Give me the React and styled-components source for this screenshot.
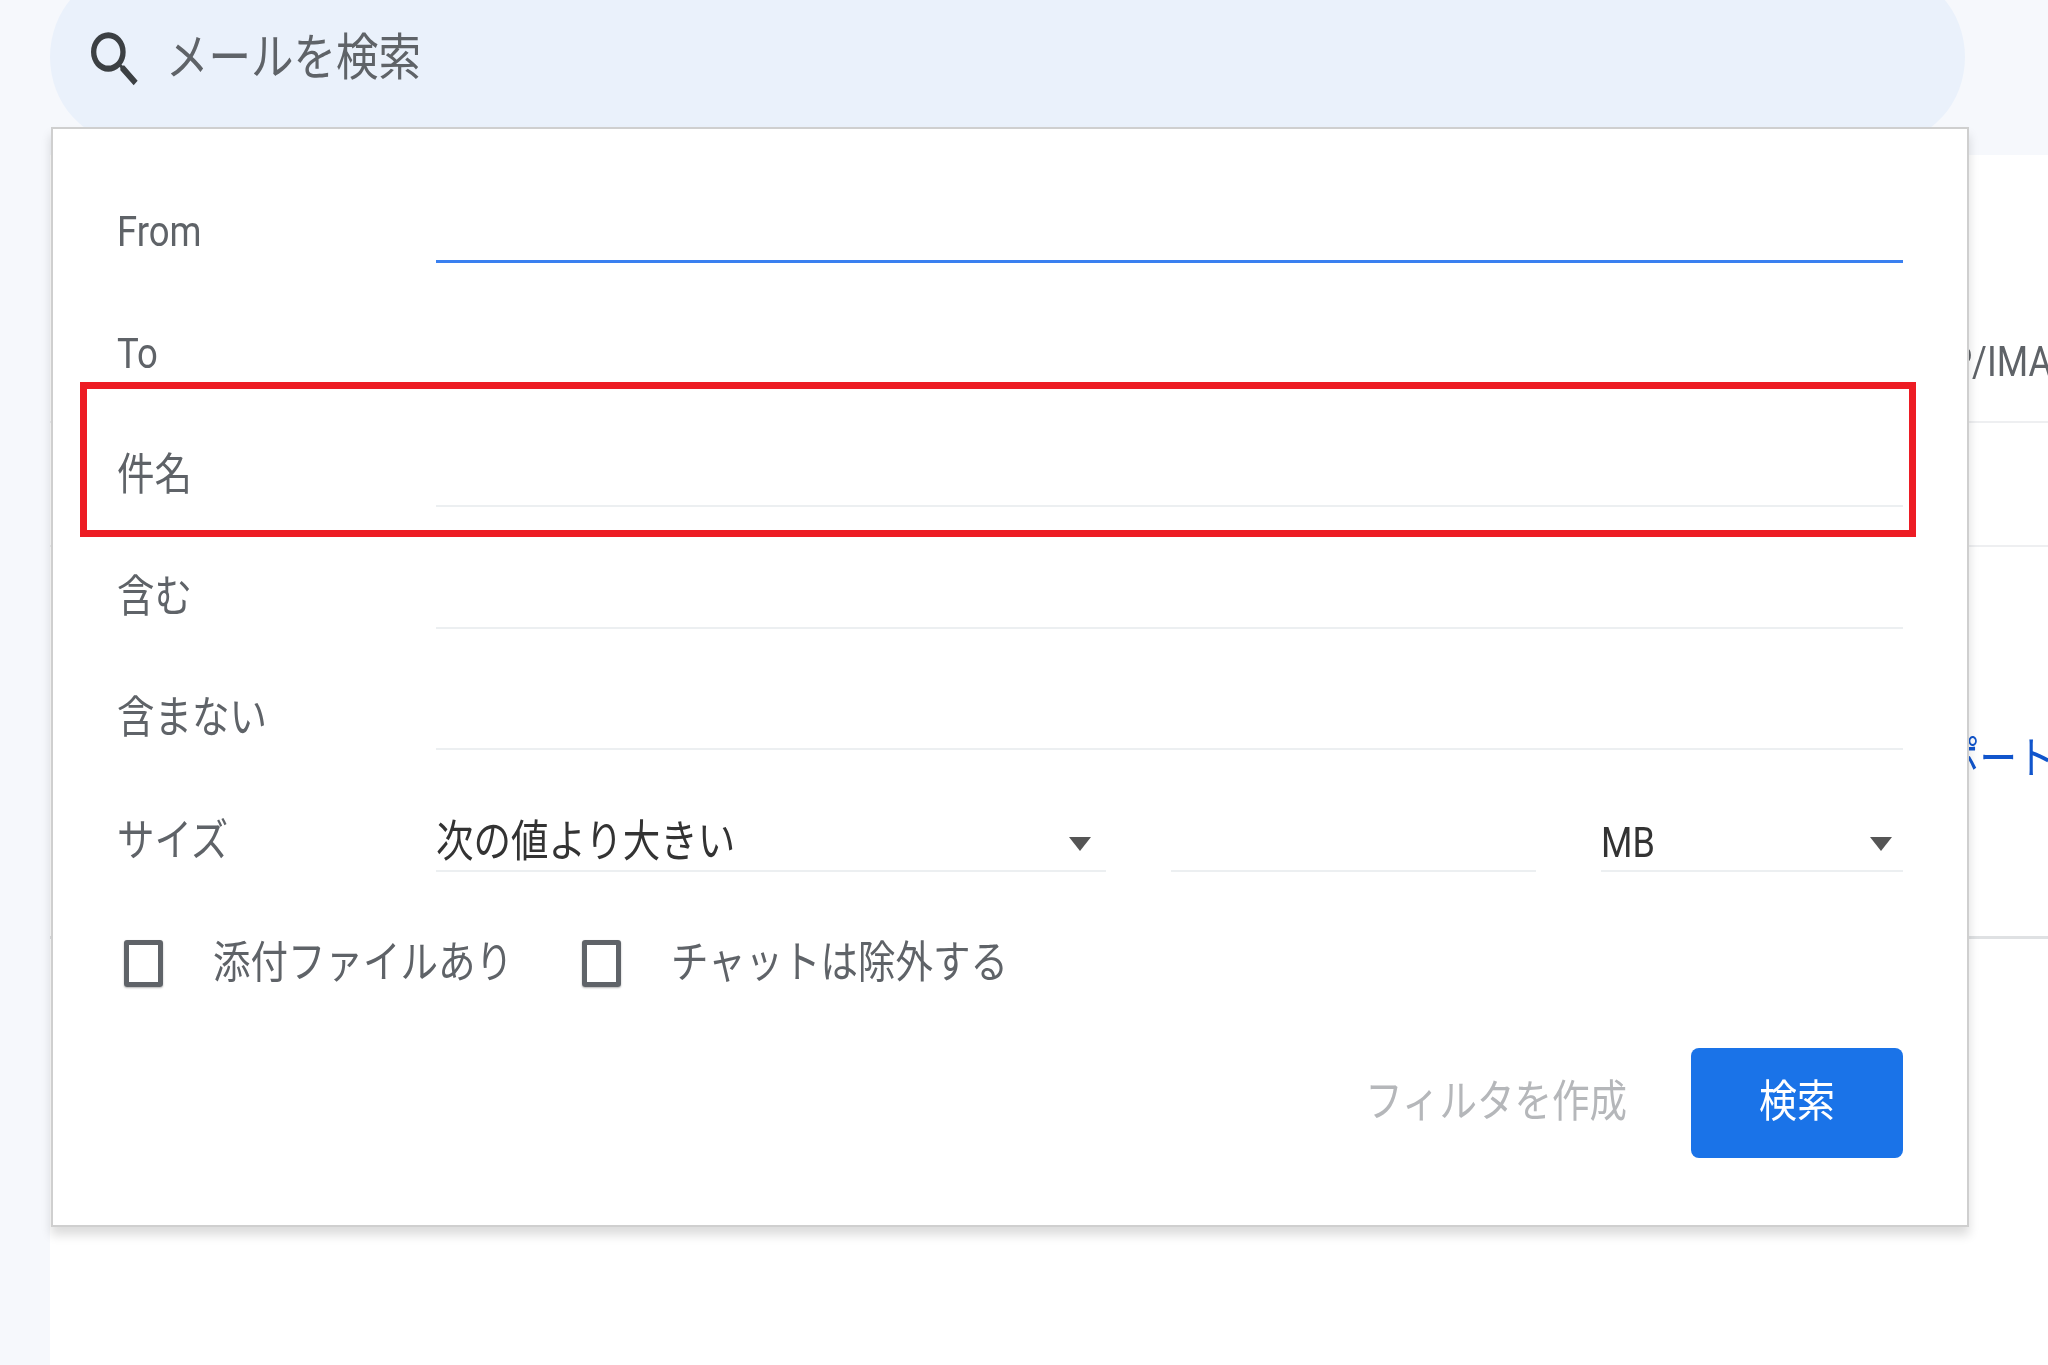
import React from 'react'
import styled, { createGlobalStyle } from 'styled-components'

const FONT = `Roboto, "Noto Sans CJK JP", sans-serif`

const Global = createGlobalStyle`
  html, body { margin: 0; padding: 0; background: #fff; }
  * { box-sizing: border-box; }
`

const Page = styled.div`
  position: relative;
  width: 2048px;
  height: 1365px;
  overflow: hidden;
  background: #f6f8fc;
  display: flex;
  flex-direction: column;
  font-family: ${FONT};
  filter: blur(0.6px);
`

const TopBand = styled.header`
  height: 155px;
  flex: none;
  padding-left: 50px;
`

const SearchBar = styled.div`
  width: 1915px;
  height: 170px;
  margin-top: -28px;
  padding-left: 33px;
  display: flex;
  align-items: center;
  gap: 19px;
  background: #eaf1fb;
  border-radius: 78px / 85px;
`

const SearchIcon = styled.svg`
  width: 64px;
  height: 73px;
  flex: none;
  fill: #3c4043;
  margin-top: 5px;
`

// 元画像が縦に伸びているので文字も縦に少し伸ばす
const Text = styled.span`
  display: inline-block;
  white-space: nowrap;
  transform: scaleY(1.18);
  font-size: ${props => props.$size || 37.5}px;
  font-weight: 400;
  margin-bottom: ${props => props.$lift || 0}px;
  color: ${props => props.$color || '#5f6368'};
`

const Main = styled.main`
  flex: 1;
  margin-left: 50px;
  background: #fff;
  display: flex;
  flex-direction: column;
`

const SettingsRow = styled.div`
  height: ${props => props.$height}px;
  flex: none;
  padding-left: ${props => props.$indent || 0}px;
  padding-top: ${props => props.$top || 0}px;
  border-bottom: ${props => props.$thick ? '3px solid #dfe1e3' : '2px solid #eeeff1'};
`

const Panel = styled.section`
  position: absolute;
  left: 51px;
  top: 127px;
  width: 1918px;
  height: 1100px;
  padding: 12px 64px 0 64px;
  background: #fff;
  border: 2px solid #cfcfcf;
  box-shadow: 0 8px 10px rgba(0, 0, 0, 0.14);
`

const Row = styled.div`
  height: 121.9px;
  display: grid;
  grid-template-columns: 319px 1fr;
  align-items: end;
`

const Label = styled.div`
  height: 60px;
  line-height: ${props => props.$line || 57}px;
`

const Field = styled.div`
  height: 60px;
  border-bottom: ${props => props.$focused ? '3px solid #3a80f0' : '2px solid #eceff1'};
`

const SizeFields = styled.div`
  display: grid;
  grid-template-columns: 670px 365px 302px;
  column-gap: 65px;
`

const Select = styled(Field)`
  display: flex;
  align-items: center;
  justify-content: space-between;
  padding-right: ${props => props.$arrowGap}px;
`

const Arrow = styled.i`
  width: 0;
  height: 0;
  margin-top: 5px;
  border-left: 11px solid transparent;
  border-right: 11px solid transparent;
  border-top: 14px solid #555;
`

const Checks = styled.div`
  height: 60px;
  margin-top: 61px;
  padding-left: 7px;
  display: flex;
  align-items: center;
`

const Check = styled.label`
  display: flex;
  align-items: center;
  gap: 50px;
  margin-right: 69px;
`

const Box = styled.span`
  width: 39px;
  height: 47px;
  flex: none;
  border: 5px solid #5f6368;
  border-radius: 3px;
  box-shadow: 0 1px 2px rgba(0, 0, 0, 0.3);
`

const Footer = styled.div`
  margin-top: 55px;
  display: flex;
  justify-content: flex-end;
  align-items: center;
  gap: 64px;
`

const SearchButton = styled.button`
  width: 212px;
  height: 110px;
  padding: 0;
  border: 0;
  border-radius: 8px;
  background: #1a73e8;
  font-family: inherit;
  display: flex;
  align-items: center;
  justify-content: center;
`

const Highlight = styled.div`
  position: absolute;
  left: 27px;
  top: 253px;
  width: 1836px;
  height: 155px;
  border: 7px solid #ed1c24;
`

const fields = ['From', 'To', '件名', '含む', '含まない']

export default function App() {
  return (
    <Page>
      <Global />
      <TopBand>
        <SearchBar>
          <SearchIcon viewBox="0 0 24 24" preserveAspectRatio="none">
            <path d="M15.5 14h-.79l-.28-.27A6.471 6.471 0 0 0 16 9.5 6.5 6.5 0 1 0 9.5 16c1.61 0 3.09-.59 4.23-1.57l.27.28v.79l5 4.99L20.49 19l-4.99-5zm-6 0C7.01 14 5 11.99 5 9.5S7.01 5 9.5 5 14 7.01 14 9.5 11.99 14 9.5 14z" />
          </SearchIcon>
          <Text $size={42.5} $lift={8}>メールを検索</Text>
        </SearchBar>
      </TopBand>
      <Main>
        <SettingsRow $height={268} $indent={1735} $top={176}>
          <Text $size={36}>転送と POP/IMAP</Text>
        </SettingsRow>
        <SettingsRow $height={124} />
        <SettingsRow $height={392} $indent={1667} $top={180} $thick>
          <Text $color="#1155cc">メールのインポート</Text>
        </SettingsRow>
      </Main>
      <Panel>
        {fields.map((name, i) => (
          <Row key={name}>
            <Label><Text $size={i < 2 ? 36.5 : 37.5}>{name}</Text></Label>
            <Field $focused={i === 0} />
          </Row>
        ))}
        <Row>
          <Label $line={59}><Text>サイズ</Text></Label>
          <SizeFields>
            <Select $arrowGap={15}>
              <Text $color="#333" $lift={8}>次の値より大きい</Text>
              <Arrow />
            </Select>
            <Field />
            <Select $arrowGap={11}>
              <Text $size={36} $color="#333" $lift={-3}>MB</Text>
              <Arrow />
            </Select>
          </SizeFields>
        </Row>
        <Checks>
          <Check>
            <Box />
            <Text $lift={9}>添付ファイルあり</Text>
          </Check>
          <Check>
            <Box />
            <Text $lift={9}>チャットは除外する</Text>
          </Check>
        </Checks>
        <Footer>
          <Text $color="#b5b7ba" $lift={12}>フィルタを作成</Text>
          <SearchButton><Text $size={38} $color="#fff" $lift={12}>検索</Text></SearchButton>
        </Footer>
        <Highlight />
      </Panel>
    </Page>
  )
}
